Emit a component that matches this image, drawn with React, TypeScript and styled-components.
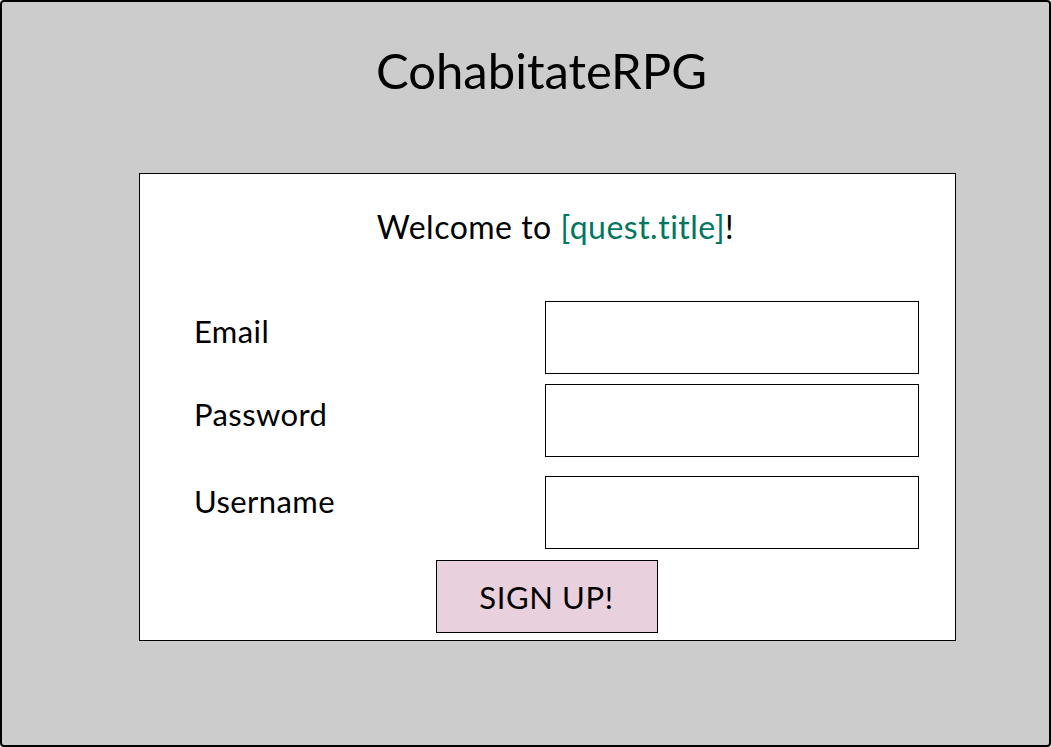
import React from 'react';
import styled, { createGlobalStyle } from 'styled-components';

const GlobalStyle = createGlobalStyle`
  html, body {
    margin: 0;
    padding: 0;
    background: #ffffff;
  }
  body {
    font-family: Lato, 'Open Sans', sans-serif;
    color: #000;
  }
  * {
    box-sizing: border-box;
  }
`;

const Frame = styled.div`
  width: 1051px;
  height: 747px;
  background: #cccccc;
  border: 2px solid #000;
  border-radius: 4px;
  padding-top: 36px;
`;

const Title = styled.h1`
  margin: 0;
  text-align: center;
  font-size: 49px;
  font-weight: 400;
  line-height: 64px;
  padding-left: 32px;
`;

const Card = styled.div`
  width: 817px;
  height: 468px;
  margin: 71px 0 0 137px;
  background: #fff;
  border: 1px solid #000;
  padding: 33px 36px 8px 55px;
  display: flex;
  flex-direction: column;
`;

const Welcome = styled.p`
  margin: 0 0 54px -3px;
  text-align: center;
  font-size: 32px;
  letter-spacing: 0.5px;
  line-height: 40px;
`;

const Highlight = styled.span`
  color: #00765f;
`;

const Form = styled.form`
  display: grid;
  grid-template-columns: 1fr 374px;
  row-gap: 10px;
`;

const Label = styled.label<{ offset: number }>`
  font-size: 31px;
  letter-spacing: 0.4px;
  line-height: 36px;
  margin-left: -1px;
  padding-top: ${({ offset }) => offset}px;
`;

const Input = styled.input<{ gapTop?: number }>`
  width: 374px;
  height: 73px;
  border: 1px solid #000;
  background: #fff;
  margin: ${({ gapTop }) => gapTop || 0}px 0 0;
  font: inherit;
  outline: none;
`;

const SubmitRow = styled.div`
  grid-column: 1 / -1;
  display: flex;
  justify-content: center;
  padding-top: 1px;
  margin-left: -21px;
`;

const Button = styled.button`
  width: 222px;
  height: 73px;
  background: #e8d0dd;
  border: 1px solid #000;
  font-family: inherit;
  font-size: 31px;
  letter-spacing: 0.6px;
  color: #000;
  padding: 0;
  cursor: pointer;
`;

export default function App() {
  return (
    <>
      <GlobalStyle />
      <Frame>
        <Title>CohabitateRPG</Title>
        <Card>
          <Welcome>
            Welcome to <Highlight>[quest.title]</Highlight>!
          </Welcome>
          <Form onSubmit={(e) => e.preventDefault()}>
            <Label htmlFor="email" offset={12}>Email</Label>
            <Input id="email" type="email" />
            <Label htmlFor="password" offset={12}>Password</Label>
            <Input id="password" type="password" />
            <Label htmlFor="username" offset={16}>Username</Label>
            <Input id="username" type="text" gapTop={9} />
            <SubmitRow>
              <Button type="submit">SIGN UP!</Button>
            </SubmitRow>
          </Form>
        </Card>
      </Frame>
    </>
  );
}
